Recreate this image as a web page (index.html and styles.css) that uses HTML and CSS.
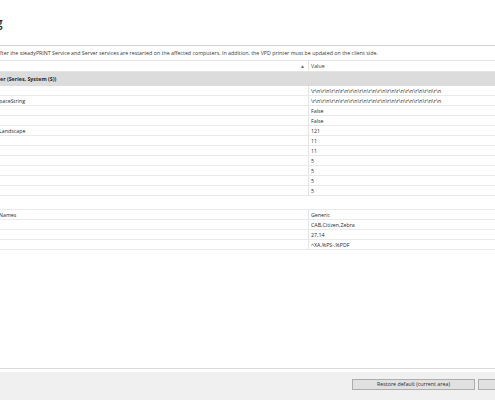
FILE: index.html
```html
<!DOCTYPE html>
<html lang="en">
<head>
<meta charset="utf-8">
<title>Settings</title>
<link rel="stylesheet" href="styles.css">
</head>
<body>
<div class="page">
  <div class="title"><span class="title-text">g</span></div>
  <div class="info">fter the steadyPRINT Service and Server services are restarted on the affected computers. In addition, the VPD printer must be updated on the client side.</div>
  <div class="grid">
    <div class="row head">
      <div class="cell name"><span class="sort">&#9650;</span></div>
      <div class="cell value">Value</div>
    </div>
    <div class="group selected"><span class="group-text">er (Series, System (S))</span></div>
    <div class="row"><div class="cell name"></div><div class="cell value">\r\n\r\n\r\n\r\n\r\n\r\n\r\n\r\n\r\n\r\n\r\n\r\n\r\n\r\n</div></div>
    <div class="row"><div class="cell name cut">paceString</div><div class="cell value">\r\n\r\n\r\n\r\n\r\n\r\n\r\n\r\n\r\n\r\n\r\n\r\n\r\n\r\n</div></div>
    <div class="row"><div class="cell name"></div><div class="cell value">False</div></div>
    <div class="row"><div class="cell name"></div><div class="cell value">False</div></div>
    <div class="row"><div class="cell name cut">Landscape</div><div class="cell value">121</div></div>
    <div class="row"><div class="cell name"></div><div class="cell value">11</div></div>
    <div class="row"><div class="cell name"></div><div class="cell value">11</div></div>
    <div class="row"><div class="cell name"></div><div class="cell value">5</div></div>
    <div class="row"><div class="cell name"></div><div class="cell value">5</div></div>
    <div class="row"><div class="cell name"></div><div class="cell value">5</div></div>
    <div class="row"><div class="cell name"></div><div class="cell value">5</div></div>
    <div class="group"></div>
    <div class="row"><div class="cell name cut">Names</div><div class="cell value">Generic</div></div>
    <div class="row"><div class="cell name"></div><div class="cell value">CAB,Citizen,Zebra</div></div>
    <div class="row"><div class="cell name"></div><div class="cell value">27,14</div></div>
    <div class="row"><div class="cell name"></div><div class="cell value">^XA,%PS-,%PDF</div></div>
  </div>
  <div class="spacer"></div>
  <div class="bar">
    <button class="btn">Restore default (current area)</button>
    <button class="btn">Restore default (all)</button>
  </div>
</div>
</body>
</html>
```
FILE: styles.css
```css
* { box-sizing: border-box; }
html, body { margin: 0; padding: 0; background: #ffffff; }
body {
  font-family: "Open Sans", "Noto Sans", Arial, sans-serif;
  font-size: 5.3px;
  color: #2a2a2a;
  overflow: hidden;
}
.page {
  height: 400px;
  width: 495px;
  display: flex;
  flex-direction: column;
  overflow: hidden;
}
.title {
  height: 46px;
  border-bottom: 1px solid #d4d4d4;
  padding-top: 17px;
  overflow: hidden;
}
.title-text {
  display: block;
  font-size: 12px;
  font-weight: 600;
  color: #2b2b2b;
  line-height: 12px;
  margin-left: -4px;
}
.info {
  height: 15px;
  line-height: 14px;
  border-bottom: 1px solid #e3e3e3;
  white-space: nowrap;
  color: #383838;
}
.grid {
  display: flex;
  flex-direction: column;
}
.row {
  display: flex;
  height: 10px;
  border-bottom: 1px solid #e9e9e9;
  line-height: 10px;
}
.row.head {
  height: 11px;
  line-height: 10px;
  border-bottom: 1px solid #e3e3e3;
}
.cell { white-space: nowrap; overflow: hidden; }
.cell.name {
  width: 309px;
  border-right: 1px solid #e3e3e3;
  display: flex;
  justify-content: flex-end;
}
.cell.name.cut {
  justify-content: flex-start;
  text-indent: -1px;
}
.cell.value {
  flex: 1;
  padding-left: 2px;
}
.head .value { color: #383838; }
.sort {
  font-size: 5px;
  color: #707070;
  padding-right: 3px;
}
.group {
  height: 14px;
  line-height: 14px;
  border-bottom: 1px solid #e9e9e9;
  font-weight: 700;
  color: #2a2a2a;
  white-space: nowrap;
}
.group.selected {
  background: #dcdcdc;
  border-bottom-color: #dcdcdc;
}
.spacer {
  flex: 1;
  border-bottom: 1px solid #dadada;
}
.bar {
  height: 28px;
  margin-top: 3px;
  background: #f0f0f0;
  display: flex;
  gap: 3px;
  padding-left: 352px;
  padding-top: 7px;
  flex-shrink: 0;
}
.btn {
  flex-shrink: 0;
  width: 123px;
  height: 11px;
  padding: 0;
  margin: 0;
  font-family: "Open Sans", "Noto Sans", Arial, sans-serif;
  font-size: 5.3px;
  line-height: 9px;
  color: #2a2a2a;
  background: #e1e1e1;
  border: 1px solid #adadad;
  border-radius: 0;
}
```
